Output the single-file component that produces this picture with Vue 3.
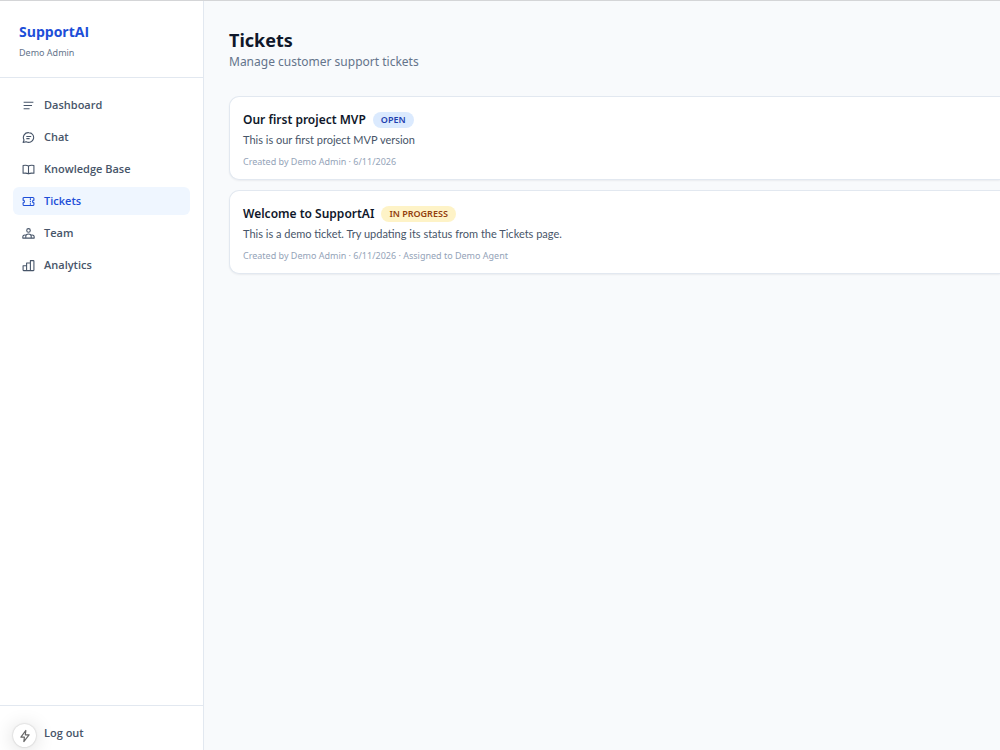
<script setup>
const navItems = [
  { label: 'Dashboard', icon: 'lines' },
  { label: 'Chat', icon: 'chat' },
  { label: 'Knowledge Base', icon: 'book' },
  { label: 'Tickets', icon: 'ticket', active: true },
  { label: 'Team', icon: 'team' },
  { label: 'Analytics', icon: 'bars' },
]

const icons = {
  lines: ['M3 6h18M3 12h15.500M3 18h11'],
  chat: [
    'M8 10h9M8 14h6',
    'M12.500 3a9 9 0 1 1-4.500 16.800L2 21l1.800-4.500A9 9 0 0 1 12.500 3z',
  ],
  book: ['M12 5.500C9.500 4 5 4 2 4.500v14.500c3-.5 7.500-.5 10 1 2.500-1.500 7-1.500 10-1V4.500c-3-.5-7.500-.5-10 1zM12 5.500V20'],
  ticket: [
    'M4 4.500h16a2 2 0 0 1 2 2v3a2.500 2.500 0 0 0 0 5v3a2 2 0 0 1-2 2H4a2 2 0 0 1-2-2v-3a2.500 2.500 0 0 0 0-5v-3a2 2 0 0 1 2-2z',
    'M15.500 6v3M15.500 10.500v3M15.500 15v3',
  ],
  team: [
    'M12 3a3.300 3.300 0 1 1 0 6.600A3.300 3.300 0 0 1 12 3z',
    'M7 20.500V17a5 4 0 0 1 10 0v3.500z',
    'M7 20.500H1.500V18A3.500 3.500 0 0 1 7 15.300M17 20.500h5.500V18a3.500 3.500 0 0 0-5.500-2.700',
  ],
  bars: ['M2 12.500h6.500V21.500H3a1 1 0 0 1-1-1zM8.500 7.500h7v14h-7zM15.500 3H21a1 1 0 0 1 1 1v16.500a1 1 0 0 1-1 1h-5.500z'],
}

const tickets = [
  {
    title: 'Our first project MVP',
    status: 'OPEN',
    tone: 'open',
    text: 'This is our first project MVP version',
    meta: 'Created by Demo Admin · 6/11/2026',
  },
  {
    title: 'Welcome to SupportAI',
    status: 'IN PROGRESS',
    tone: 'progress',
    text: 'This is a demo ticket. Try updating its status from the Tickets page.',
    meta: 'Created by Demo Admin · 6/11/2026 · Assigned to Demo Agent',
  },
]
</script>

<template>
  <div class="shell">
    <aside class="sidebar">
      <header class="brand">
        <div class="brand-name">SupportAI</div>
        <div class="brand-user">Demo Admin</div>
      </header>
      <nav class="nav">
        <a v-for="item in navItems" :key="item.label" href="#" class="nav-link" :class="{ active: item.active }">
          <svg class="nav-icon" viewBox="0 0 24 24" aria-hidden="true">
            <path v-for="d in icons[item.icon]" :key="d" :d="d" />
          </svg>
          <span>{{ item.label }}</span>
        </a>
      </nav>
      <footer class="foot">
        <button type="button" class="logout">Log out</button>
      </footer>
    </aside>

    <main class="main">
      <h1 class="title">Tickets</h1>
      <p class="subtitle">Manage customer support tickets</p>
      <div class="list">
        <article v-for="t in tickets" :key="t.title" class="card">
          <div class="card-head">
            <h2 class="card-title">{{ t.title }}</h2>
            <span class="badge" :class="t.tone">{{ t.status }}</span>
          </div>
          <p class="card-text">{{ t.text }}</p>
          <p class="card-meta">{{ t.meta }}</p>
        </article>
      </div>
    </main>

    <button type="button" class="fab" aria-label="Quick actions">
      <svg viewBox="0 0 24 24" aria-hidden="true">
        <path d="M13.500 2.500 5 14h6l-1 7.500L19 10h-6.500z" />
      </svg>
    </button>
  </div>
</template>

<style>
body {
  background: #f8fafc;
}
</style>

<style scoped>
.shell {
  display: flex;
  box-sizing: border-box;
  min-height: 100vh;
  border-top: 1px solid #d4d5d7;
  font-family: "Segoe UI", "Noto Sans", sans-serif;
  color: #0f172a;
}
h1, h2, p {
  margin: 0;
}
.sidebar {
  display: flex;
  flex-direction: column;
  flex: 0 0 204px;
  box-sizing: border-box;
  background: #fff;
  border-right: 1px solid #e2e8f0;
  font-family: "Segoe UI", "Open Sans", sans-serif;
}
.brand {
  padding: 20px 19px 15px;
  border-bottom: 1px solid #e2e8f0;
}
.brand-name {
  font-size: 14px;
  line-height: 22px;
  font-weight: 700;
  color: #1d4ed8;
}
.brand-user {
  font-family: "Segoe UI", "Noto Sans", sans-serif;
  font-size: 9px;
  line-height: 19px;
  color: #64748b;
}
.nav {
  display: flex;
  flex-direction: column;
  gap: 4px;
  padding: 13px;
}
.nav-link {
  display: flex;
  align-items: center;
  gap: 9px;
  padding: 0 9px;
  border-radius: 6px;
  font-size: 11px;
  line-height: 28px;
  font-weight: 600;
  color: #475569;
  text-decoration: none;
}
.nav-link.active {
  background: #eff6ff;
  color: #1d4ed8;
}
.nav-icon {
  width: 13px;
  height: 13px;
  fill: none;
  stroke: currentColor;
  stroke-width: 2;
  stroke-linejoin: round;
}
.foot {
  margin-top: auto;
  padding: 13px 13px 3px;
  border-top: 1px solid #e2e8f0;
}
.logout {
  display: block;
  width: 100%;
  padding: 0 0 0 31px;
  border: 0;
  background: none;
  font-family: inherit;
  font-size: 11px;
  line-height: 28px;
  font-weight: 600;
  color: #475569;
  text-align: left;
}
.main {
  flex: 1;
  min-width: 0;
  padding: 26px 0 26px 25px;
  background: #f8fafc;
}
.title {
  font-size: 18px;
  line-height: 26px;
  font-weight: 700;
}
.subtitle {
  font-size: 12px;
  line-height: 18px;
  color: #64748b;
}
.list {
  display: flex;
  flex-direction: column;
  gap: 10px;
  margin-top: 25px;
}
.card {
  padding: 13px 13px 9px;
  border: 1px solid #e2e8f0;
  border-right: 0;
  border-radius: 10px 0 0 10px;
  background: #fff;
  box-shadow: 0 1px 2px rgba(15, 23, 42, 0.06);
}
.card-head {
  display: flex;
  align-items: center;
  gap: 7px;
}
.card-title {
  font-size: 12px;
  line-height: 20px;
  font-weight: 600;
}
.badge {
  padding: 0 8px;
  border-radius: 8px;
  font-size: 9px;
  line-height: 16px;
  font-weight: 600;
}
.badge.open {
  background: #dbeafe;
  color: #1e40af;
}
.badge.progress {
  background: #fef3c7;
  color: #92400e;
}
.card-text {
  margin-top: 1px;
  font-family: "Segoe UI", Lato, sans-serif;
  font-size: 11px;
  line-height: 18px;
  color: #475569;
}
.card-meta {
  margin-top: 5px;
  font-size: 9px;
  line-height: 16px;
  color: #94a3b8;
}
.fab {
  position: fixed;
  left: 13px;
  bottom: 3px;
  display: flex;
  align-items: center;
  justify-content: center;
  width: 23px;
  height: 23px;
  padding: 0;
  border: 0;
  border-radius: 50%;
  background: #fff;
  box-shadow: 0 0 2px rgba(0, 0, 0, 0.25), 0 2px 20px rgba(0, 0, 0, 0.16);
}
.fab svg {
  width: 14px;
  height: 14px;
  fill: none;
  stroke: #666;
  stroke-width: 2;
  stroke-linejoin: round;
}
</style>
